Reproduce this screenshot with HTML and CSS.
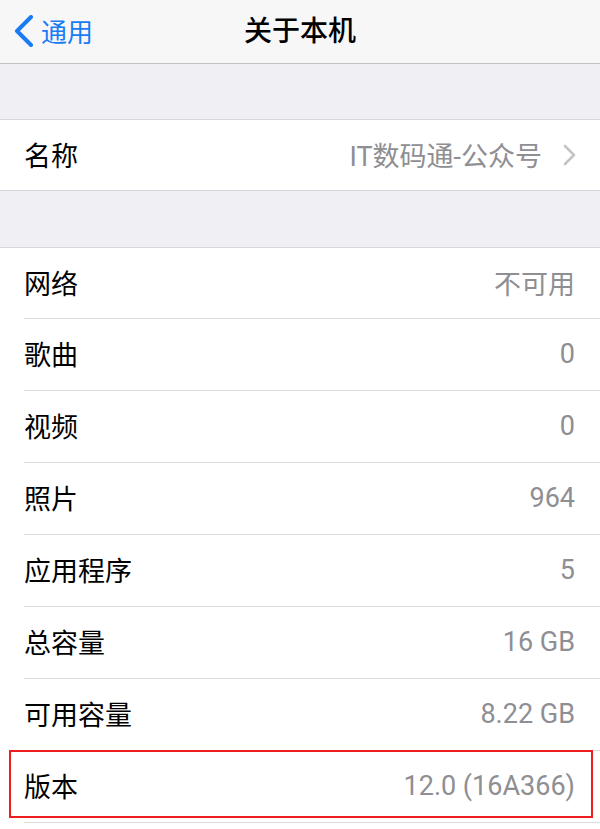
FILE: index.html
```html
<!DOCTYPE html>
<html lang="zh-CN">
<head>
    <meta charset="UTF-8">
    <meta name="viewport" content="width=device-width, initial-scale=1.0">
    <title>关于本机</title>
    <link rel="stylesheet" href="styles.css">
</head>
<body>
    <div class="navbar">
        <a class="back" href="#">
            <svg class="back-icon" width="20" height="32" viewBox="0 0 20 32">
                <path d="M17 2 L3 16 L17 30" fill="none" stroke="#1a7cf5" stroke-width="4" stroke-linecap="round" stroke-linejoin="round"/>
            </svg>
            <span>通用</span>
        </a>
        <div class="title">关于本机</div>
    </div>

    <div class="gap gap-top"></div>

    <div class="group">
        <div class="row">
            <span class="label">名称</span>
            <span class="value">IT数码通-公众号</span>
            <svg class="chevron" width="13" height="22" viewBox="0 0 13 22">
                <path d="M2 2 L11 11 L2 20" fill="none" stroke="#c4c4c8" stroke-width="2.6" stroke-linecap="round" stroke-linejoin="round"/>
            </svg>
        </div>
    </div>

    <div class="gap"></div>

    <div class="group">
        <div class="row"><span class="label">网络</span><span class="value">不可用</span></div>
        <div class="row"><span class="label">歌曲</span><span class="value">0</span></div>
        <div class="row"><span class="label">视频</span><span class="value">0</span></div>
        <div class="row"><span class="label">照片</span><span class="value">964</span></div>
        <div class="row"><span class="label">应用程序</span><span class="value">5</span></div>
        <div class="row"><span class="label">总容量</span><span class="value">16 GB</span></div>
        <div class="row"><span class="label">可用容量</span><span class="value">8.22 GB</span></div>
        <div class="row highlight"><span class="label">版本</span><span class="value">12.0 (16A366)</span></div>
        <div class="row"></div>
    </div>
</body>
</html>
```

FILE: styles.css
```css
body {
    margin: 0;
    height: 829px;
    background-color: #efeff4;
    font-family: Roboto, "Noto Sans CJK SC", sans-serif;
    overflow: hidden;
}

.navbar {
    height: 63px;
    background-color: #f7f7f8;
    border-bottom: 1px solid #c2c2c6;
    display: flex;
    align-items: center;
    justify-content: center;
    position: relative;
}

.back {
    position: absolute;
    left: 14px;
    top: 12px;
    display: flex;
    align-items: center;
    text-decoration: none;
    color: #1a7cf5;
    font-size: 26px;
}

.back-icon {
    margin-right: 7px;
}

.title {
    font-size: 28px;
    font-weight: 500;
    color: #000;
    margin-top: -6px;
}

.gap {
    height: 56px;
}

.gap-top {
    height: 55px;
}

.group {
    background-color: #fff;
    border-top: 1px solid #d8d8dc;
    border-bottom: 1px solid #d8d8dc;
}

.row {
    height: 71px;
    display: flex;
    align-items: center;
    margin-left: 24px;
    padding: 0 25px 0 0;
    border-bottom: 1px solid #dcdce0;
    position: relative;
}

.group .row:first-child {
    height: 70px;
}

.group .row:last-child {
    border-bottom: none;
}

.label {
    font-size: 27px;
    color: #000;
    flex: 1;
    margin-top: -2px;
}

.value {
    font-size: 27px;
    color: #8e8e93;
    margin-top: -2px;
}

.chevron {
    margin-left: 21px;
    margin-right: -1px;
}

.highlight::after {
    content: "";
    position: absolute;
    left: -15px;
    right: 7px;
    top: -1px;
    bottom: 4px;
    border: 2px solid #ee1c1c;
}
```
